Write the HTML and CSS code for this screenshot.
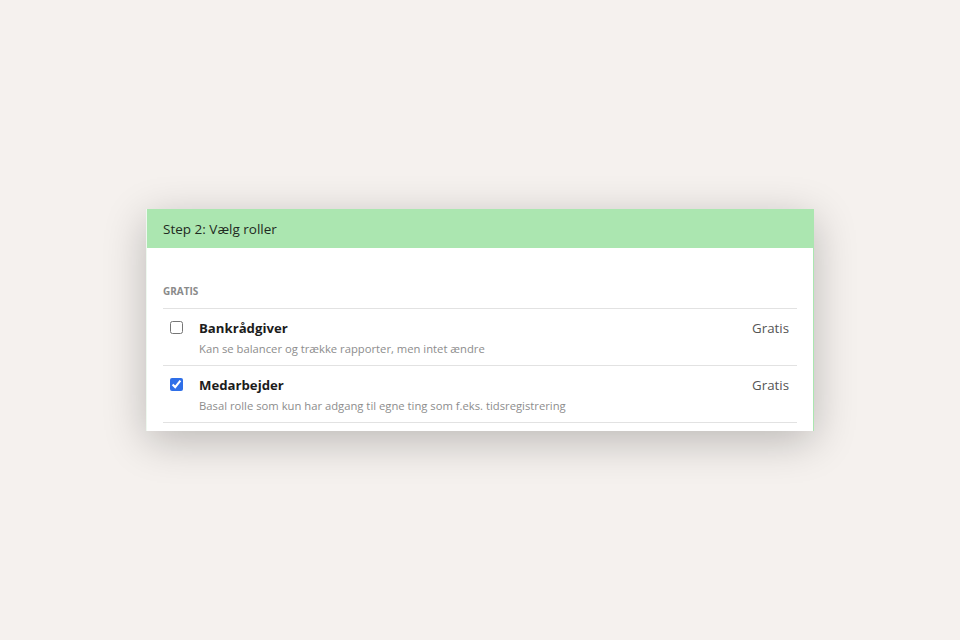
FILE: index.html
```html
<!DOCTYPE html>
<html lang="da">
<head>
    <meta charset="UTF-8">
    <meta name="viewport" content="width=device-width, initial-scale=1.0">
    <title>Vælg roller</title>
    <link rel="stylesheet" href="styles.css">
</head>
<body>
    <div class="card">
        <div class="card-header">Step 2: Vælg roller</div>
        <div class="card-body">
            <div class="group-label">GRATIS</div>
            <!-- roles -->
            <label class="role">
                <input type="checkbox" class="role-check">
                <div class="role-info">
                    <div class="role-name">Bankrådgiver</div>
                    <div class="role-desc">Kan se balancer og trække rapporter, men intet ændre</div>
                </div>
                <div class="role-price">Gratis</div>
            </label>
            <label class="role">
                <input type="checkbox" class="role-check" checked>
                <div class="role-info">
                    <div class="role-name">Medarbejder</div>
                    <div class="role-desc">Basal rolle som kun har adgang til egne ting som f.eks. tidsregistrering</div>
                </div>
                <div class="role-price">Gratis</div>
            </label>
        </div>
    </div>
</body>
</html>
```

FILE: styles.css
```css
body {
    margin: 0;
    height: 640px;
    display: flex;
    justify-content: center;
    align-items: flex-start;
    font-family: "Open Sans", "Noto Sans", sans-serif;
    background-color: #f5f1ee;
}
.card {
    margin-top: 209px;
    width: 668px;
    box-sizing: border-box;
    background-color: #fff;
    border-left: 1px solid #eef8ef;
    border-right: 1px solid #abe6b0;
    box-shadow: 0 10px 40px rgba(0, 0, 0, 0.24);
}
.card-header {
    height: 39px;
    box-sizing: border-box;
    padding: 11px 16px 0;
    background-color: #abe6b0;
    color: #1f2a22;
    font-size: 13.5px;
}
.card-body {
    padding: 36px 16px 8px 16px;
}
.group-label {
    font-size: 10px;
    font-weight: 700;
    color: #8a8a8a;
    padding-bottom: 10px;
    border-bottom: 1px solid #e2e2e2;
}
.role {
    display: flex;
    align-items: flex-start;
    padding: 10px 8px 8px 7px;
    border-bottom: 1px solid #e2e2e2;
}
.role-check {
    margin: 2px 16px 0 0;
    width: 13px;
    height: 13px;
    accent-color: #2f6fe8;
}
.role-info {
    flex: 1;
}
.role-name {
    font-size: 13.2px;
    font-weight: 700;
    color: #1c1c1c;
    line-height: 19px;
}
.role-desc {
    margin-top: 3px;
    font-size: 11.25px;
    color: #8d8d8d;
    line-height: 16px;
}
.role-price {
    font-size: 13.3px;
    color: #555;
    line-height: 19px;
}
```
